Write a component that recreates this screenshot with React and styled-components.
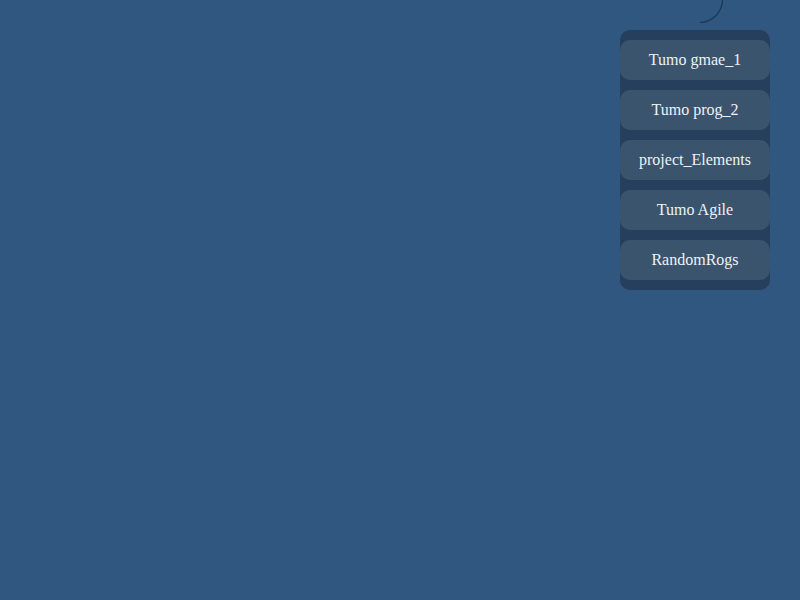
import React from 'react';
import styled, { createGlobalStyle } from 'styled-components';

const GlobalStyle = createGlobalStyle`
  html, body {
    margin: 0;
    padding: 0;
    background-color: #30577f;
    font-family: 'Liberation Serif', 'Times New Roman', serif;
  }
`;

const Page = styled.div`
  position: relative;
  width: 800px;
  height: 600px;
  display: flex;
  justify-content: flex-end;
  align-items: flex-start;
  padding: 30px 30px 0 0;
  box-sizing: border-box;
  overflow: hidden;
`;

const Arc = styled.svg`
  position: absolute;
  top: 0;
  left: 676px;
`;

const Menu = styled.nav`
  display: flex;
  flex-direction: column;
  gap: 10px;
  width: 150px;
  padding: 10px 0;
  background-color: #253f5d;
  border-radius: 10px;
`;

const MenuButton = styled.div`
  height: 40px;
  display: flex;
  align-items: center;
  justify-content: center;
  background-color: #3a546d;
  border-radius: 10px;
  color: #eef2f6;
  font-size: 16px;
`;

const projetos = ['Tumo gmae_1', 'Tumo prog_2', 'project_Elements', 'Tumo Agile', 'RandomRogs'];

function App() {
  return (
    <>
      <GlobalStyle />
      <Page>
        <Arc width="50" height="26" viewBox="0 0 50 26">
          <path d="M46.5 0 A23 23 0 0 1 24 22.5" fill="none" stroke="#1f3652" strokeWidth="1.2" />
        </Arc>
        <Menu>
          {projetos.map((p) => (
            <MenuButton key={p}>{p}</MenuButton>
          ))}
        </Menu>
      </Page>
    </>
  );
}

export default App;
